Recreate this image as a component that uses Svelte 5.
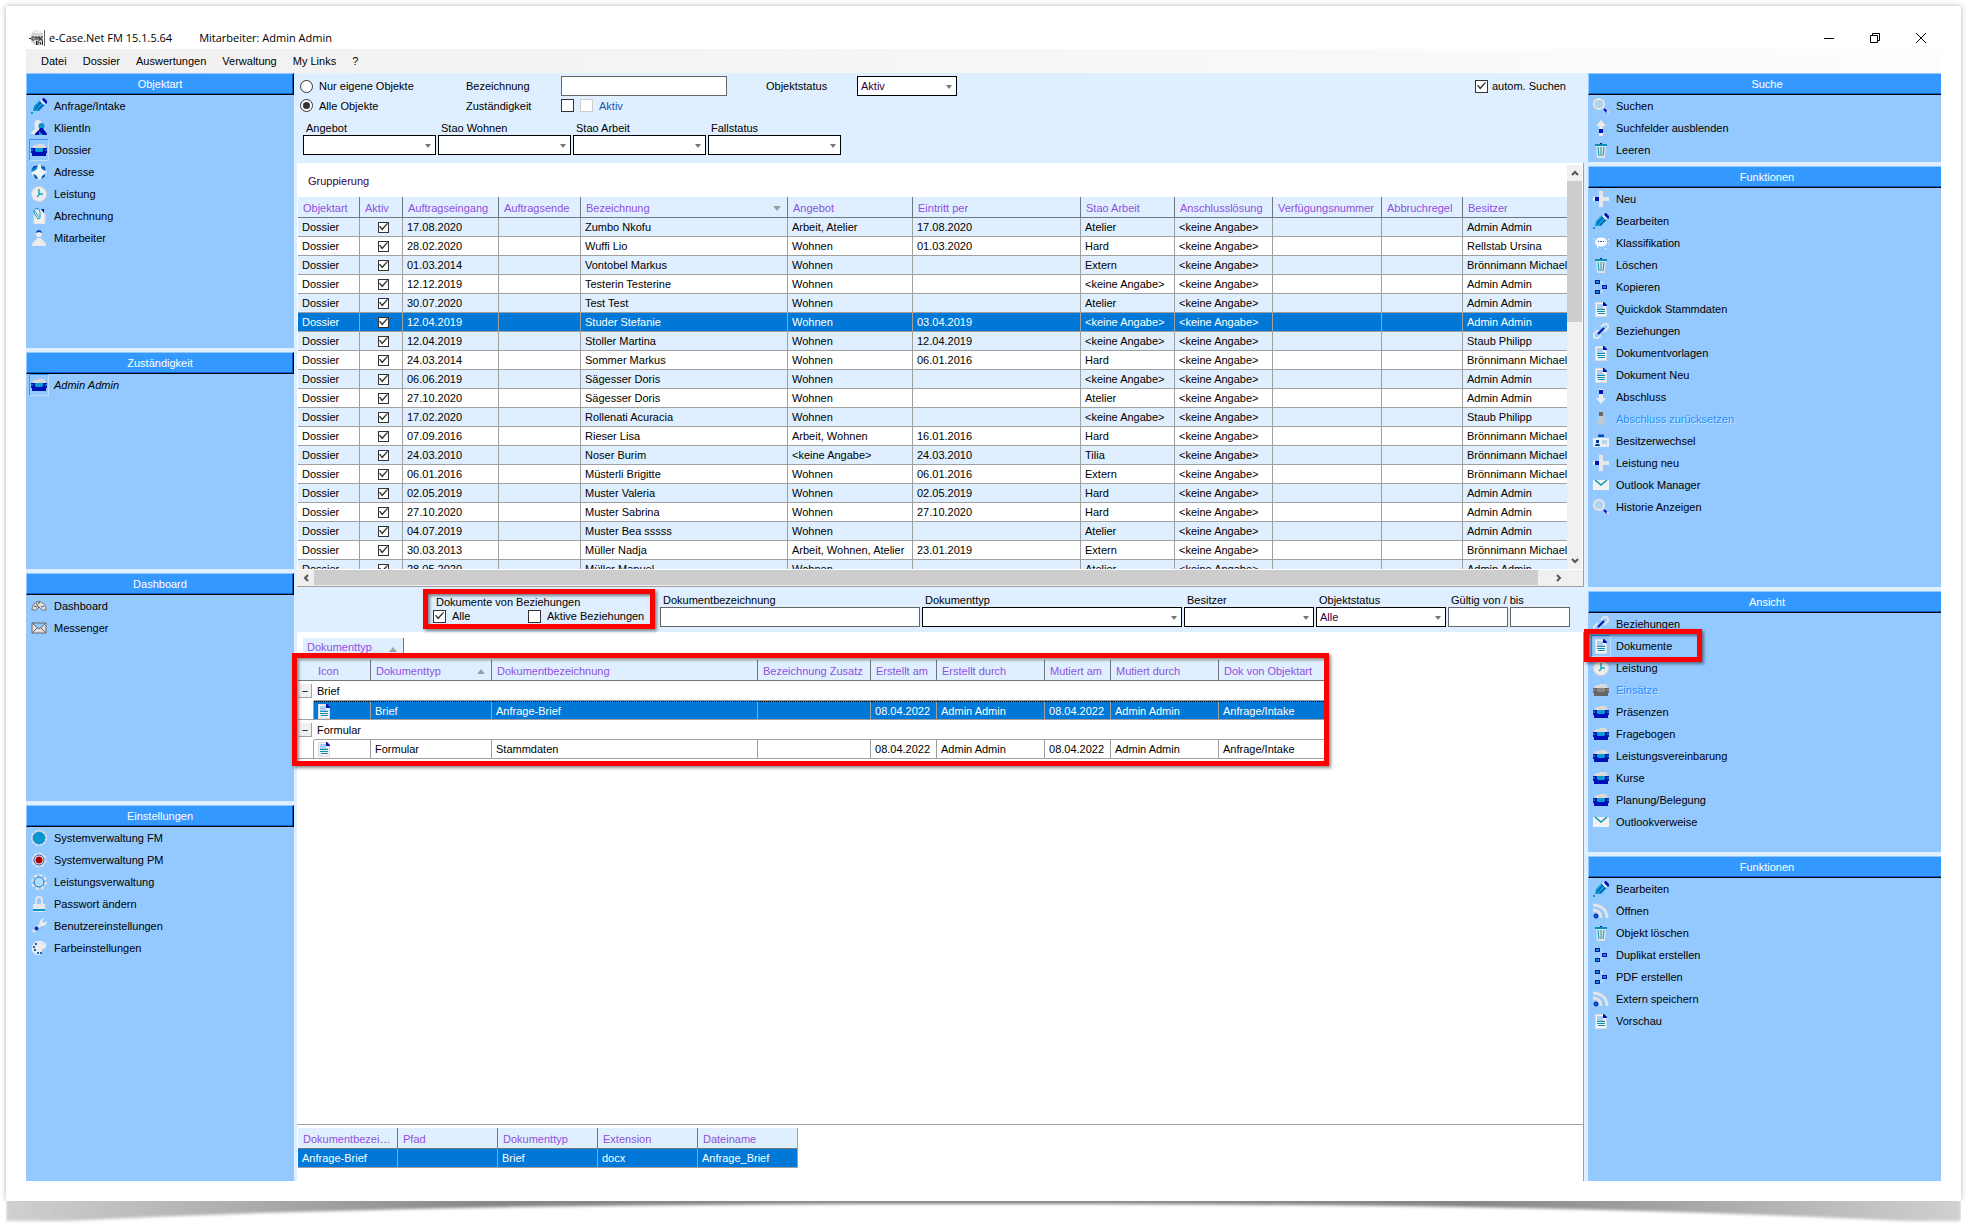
<script lang="ts">
  type Item = { label: string; icon: string; active?: boolean; disabled?: boolean; italic?: boolean; marked?: boolean };
  type Panel = { title: string; items: Item[] };

  const menu = ['Datei', 'Dossier', 'Auswertungen', 'Verwaltung', 'My Links', '?'];

  const leftPanels: Panel[] = [
    {
      title: 'Objektart',
      items: [
        { label: 'Anfrage/Intake', icon: 'pencil' },
        { label: 'KlientIn', icon: 'people' },
        { label: 'Dossier', icon: 'folder', active: true },
        { label: 'Adresse', icon: 'globe' },
        { label: 'Leistung', icon: 'clock' },
        { label: 'Abrechnung', icon: 'clip' },
        { label: 'Mitarbeiter', icon: 'person' }
      ]
    },
    {
      title: 'Zuständigkeit',
      items: [{ label: 'Admin Admin', icon: 'folder', active: true, italic: true }]
    },
    {
      title: 'Dashboard',
      items: [
        { label: 'Dashboard', icon: 'gauge' },
        { label: 'Messenger', icon: 'envelope' }
      ]
    },
    {
      title: 'Einstellungen',
      items: [
        { label: 'Systemverwaltung FM', icon: 'gearFull' },
        { label: 'Systemverwaltung PM', icon: 'gearRed' },
        { label: 'Leistungsverwaltung', icon: 'gear' },
        { label: 'Passwort ändern', icon: 'lock' },
        { label: 'Benutzereinstellungen', icon: 'wrench' },
        { label: 'Farbeinstellungen', icon: 'palette' }
      ]
    }
  ];

  const rightPanels: Panel[] = [
    {
      title: 'Suche',
      items: [
        { label: 'Suchen', icon: 'search' },
        { label: 'Suchfelder ausblenden', icon: 'up' },
        { label: 'Leeren', icon: 'trash' }
      ]
    },
    {
      title: 'Funktionen',
      items: [
        { label: 'Neu', icon: 'plus' },
        { label: 'Bearbeiten', icon: 'pencil' },
        { label: 'Klassifikation', icon: 'bubble' },
        { label: 'Löschen', icon: 'trash' },
        { label: 'Kopieren', icon: 'copy' },
        { label: 'Quickdok Stammdaten', icon: 'doc' },
        { label: 'Beziehungen', icon: 'link' },
        { label: 'Dokumentvorlagen', icon: 'doc' },
        { label: 'Dokument Neu', icon: 'doc' },
        { label: 'Abschluss', icon: 'down' },
        { label: 'Abschluss zurücksetzen', icon: 'down', disabled: true },
        { label: 'Besitzerwechsel', icon: 'card' },
        { label: 'Leistung neu', icon: 'plus' },
        { label: 'Outlook Manager', icon: 'mail' },
        { label: 'Historie Anzeigen', icon: 'search' }
      ]
    },
    {
      title: 'Ansicht',
      items: [
        { label: 'Beziehungen', icon: 'link' },
        { label: 'Dokumente', icon: 'doc', active: true, marked: true },
        { label: 'Leistung', icon: 'clock' },
        { label: 'Einsätze', icon: 'folder', disabled: true },
        { label: 'Präsenzen', icon: 'folder' },
        { label: 'Fragebogen', icon: 'folder' },
        { label: 'Leistungsvereinbarung', icon: 'folder' },
        { label: 'Kurse', icon: 'folder' },
        { label: 'Planung/Belegung', icon: 'folder' },
        { label: 'Outlookverweise', icon: 'mail' }
      ]
    },
    {
      title: 'Funktionen',
      items: [
        { label: 'Bearbeiten', icon: 'pencil' },
        { label: 'Öffnen', icon: 'feed' },
        { label: 'Objekt löschen', icon: 'trash' },
        { label: 'Duplikat erstellen', icon: 'copy' },
        { label: 'PDF erstellen', icon: 'copy' },
        { label: 'Extern speichern', icon: 'feed' },
        { label: 'Vorschau', icon: 'doc' }
      ]
    }
  ];

  const columns = [
    { label: 'Objektart', width: 62 },
    { label: 'Aktiv', width: 43 },
    { label: 'Auftragseingang', width: 96 },
    { label: 'Auftragsende', width: 82 },
    { label: 'Bezeichnung', width: 207, sort: true },
    { label: 'Angebot', width: 125 },
    { label: 'Eintritt per', width: 168 },
    { label: 'Stao Arbeit', width: 94 },
    { label: 'Anschlusslösung', width: 98 },
    { label: 'Verfügungsnummer', width: 109 },
    { label: 'Abbruchregel', width: 81 },
    { label: 'Besitzer', width: 104 }
  ];

  const none = '<keine Angabe>';
  const admin = 'Admin Admin';
  const michael = 'Brönnimann Michael';

  // Auftragseingang, Bezeichnung, Angebot, Eintritt per, Stao Arbeit, Besitzer
  const dossiers = [
    ['17.08.2020', 'Zumbo Nkofu', 'Arbeit, Atelier', '17.08.2020', 'Atelier', admin],
    ['28.02.2020', 'Wuffi Lio', 'Wohnen', '01.03.2020', 'Hard', 'Rellstab Ursina'],
    ['01.03.2014', 'Vontobel Markus', 'Wohnen', '', 'Extern', michael],
    ['12.12.2019', 'Testerin Testerine', 'Wohnen', '', none, admin],
    ['30.07.2020', 'Test Test', 'Wohnen', '', 'Atelier', admin],
    ['12.04.2019', 'Studer Stefanie', 'Wohnen', '03.04.2019', none, admin],
    ['12.04.2019', 'Stoller Martina', 'Wohnen', '12.04.2019', none, 'Staub Philipp'],
    ['24.03.2014', 'Sommer Markus', 'Wohnen', '06.01.2016', 'Hard', michael],
    ['06.06.2019', 'Sägesser Doris', 'Wohnen', '', none, admin],
    ['27.10.2020', 'Sägesser Doris', 'Wohnen', '', 'Atelier', admin],
    ['17.02.2020', 'Rollenati Acuracia', 'Wohnen', '', none, 'Staub Philipp'],
    ['07.09.2016', 'Rieser Lisa', 'Arbeit, Wohnen', '16.01.2016', 'Hard', michael],
    ['24.03.2010', 'Noser Burim', none, '24.03.2010', 'Tilia', michael],
    ['06.01.2016', 'Müsterli Brigitte', 'Wohnen', '06.01.2016', 'Extern', michael],
    ['02.05.2019', 'Muster Valeria', 'Wohnen', '02.05.2019', 'Hard', admin],
    ['27.10.2020', 'Muster Sabrina', 'Wohnen', '27.10.2020', 'Hard', admin],
    ['04.07.2019', 'Muster Bea sssss', 'Wohnen', '', 'Atelier', admin],
    ['30.03.2013', 'Müller Nadja', 'Arbeit, Wohnen, Atelier', '23.01.2019', 'Extern', michael],
    ['28.05.2020', 'Müller Manuel', 'Wohnen', '', 'Atelier', admin]
  ];
  let selected = 5;

  const docColumns = [
    { label: 'Dokumenttyp', width: 121, sort: true },
    { label: 'Dokumentbezeichnung', width: 266 },
    { label: 'Bezeichnung Zusatz', width: 113 },
    { label: 'Erstellt am', width: 66 },
    { label: 'Erstellt durch', width: 108 },
    { label: 'Mutiert am', width: 66 },
    { label: 'Mutiert durch', width: 108 },
    { label: 'Dok von Objektart', width: 105 }
  ];

  const docGroups = [
    { name: 'Brief', title: 'Anfrage-Brief', selected: true },
    { name: 'Formular', title: 'Stammdaten', selected: false }
  ];
</script>

{#snippet icon(name: string)}
  <svg class="icon" viewBox="0 0 16 16" width="16" height="16" aria-hidden="true">
    {#if name === 'pencil'}
      <path d="M2 13 3 8 9 2l5 5-6 6z" fill="#0a9bd0" />
      <path d="m4 11 6-7M7 12l6-6" stroke="#0030b8" stroke-width="1" />
      <path d="m9 3 3-3 4 4-3 3z" fill="#f1f1f1" />
      <path d="M12 0h1l3 3v2l-1 1-4-4z" fill="#0010c0" />
      <path d="M0 14h2v2H0z" fill="#0a9bd0" />
    {:else if name === 'people'}
      <path d="M7 0c3 0 4 3 3 5L8 8v6H0c0-4 4-3 4-6-1-3-1-8 3-8z" fill="#e9e9e9" />
      <circle cx="10.500" cy="6" r="3" fill="#0a8fd0" />
      <path d="M4 15c0-3 4-4 5-7h3c1 3 4 4 4 7z" fill="#0010b0" />
      <path d="m8 11 4 4H8z" fill="#0a9bd0" />
    {:else if name === 'folder'}
      <path d="M1 6 3 3h3l1-1h6l2 4z" fill="#d9d9d9" />
      <path class="f-dark" d="M0 6h16v5h-1v3H1v-3H0z" fill="#0010b8" />
      <path class="f-mid" d="M4 6h8v3l-1 1H5L4 9z" fill="#0a9bd0" />
      <path class="f-mid" d="M0 7h2v2H0zM14 7h2v2h-2z" fill="#0a6ad0" />
    {:else if name === 'globe'}
      <circle cx="8" cy="8" r="7.500" fill="#eef3f6" />
      <path d="M3 2 7 1 6 5 3 7 0 8l1-4zM10 1l4 2 1 4-3-1-2-2zM2 10l3 1 2 3-1 1-3-2zM15 9l-2 4-3 2 1-3z" fill="#0a7fc6" />
      <path d="m3 2 2 0-3 3zM12 2l2 2-1 1zM13 11l1 1-3 3zM3 12l3 2-1 1z" fill="#0010b0" />
    {:else if name === 'clock'}
      <circle cx="8" cy="8" r="7.500" fill="#ededed" stroke="#d6d6d6" />
      <path d="M8 3v6M8 8h4M8 9l-2 2" fill="none" stroke="#12a5c8" stroke-width="1.500" />
    {:else if name === 'clip'}
      <path d="M3 2h7l4 4v10H3z" fill="#f0f0f0" stroke="#dcdcdc" />
      <path d="M10 1h3v4z" fill="#0010b0" />
      <path d="M4 1c3-2 5 1 5 4v5l-2 1-4-6V2l5 7" fill="none" stroke="#0a9bc0" />
    {:else if name === 'person'}
      <circle cx="8" cy="4" r="3" fill="#eee" />
      <path d="M5 3c0-4 6-4 6 0L8 2z" fill="#0050b0" />
      <path d="M1 16c0-5 4-5 5-8h4c1 3 5 3 5 8z" fill="#ebebeb" />
    {:else if name === 'gauge'}
      <path d="M1 12C1 1 15 1 15 12h-4L8 9l-3 3z" fill="#dedede" stroke="#777" />
      <path d="M8 10 5 5M8 3v3M3 8l3 1M13 8l-3 1" stroke="#555" fill="none" />
    {:else if name === 'envelope'}
      <path d="M1 3h14v10H1zM1 3l7 6 7-6M1 13l5-5M15 13l-5-5" fill="#dedede" stroke="#666" />
    {:else if name === 'gearFull'}
      <circle cx="8" cy="8" r="7" fill="none" stroke="#dfe3e6" stroke-width="2" stroke-dasharray="3 1" />
      <circle cx="8" cy="8" r="6" fill="#0a96d0" stroke="#0878b8" stroke-dasharray="1 1" />
    {:else if name === 'gearRed'}
      <circle cx="8" cy="8" r="6.500" fill="#e4e4e4" stroke="#e4e4e4" stroke-width="2" stroke-dasharray="3 2" />
      <circle cx="8" cy="8" r="5" fill="#fff" stroke="#1a4ab0" />
      <circle cx="8" cy="8" r="3.500" fill="#a80000" />
    {:else if name === 'gear'}
      <circle cx="8" cy="8" r="6.500" fill="none" stroke="#e4e4e4" stroke-width="3" stroke-dasharray="3 2" />
      <circle cx="8" cy="8" r="5" fill="#b5dcff" stroke="#0a7fc6" />
    {:else if name === 'lock'}
      <path d="M5 8V4c0-4 6-4 6 0v4" fill="none" stroke="#e4e4e4" stroke-width="2" />
      <path d="M2 8h12v8H2z" fill="#e8e8e8" />
      <path d="M2 13h12v2H2z" fill="#0a96c8" />
    {:else if name === 'wrench'}
      <path d="m2 14 8-8" stroke="#e0e0e0" stroke-width="3" />
      <path d="M9 3c1-2 3-3 4-2l-2 2 2 2 3-2c0 3-2 5-5 5L8 7z" fill="#ececec" />
      <circle cx="5.500" cy="10.500" r="2" fill="#0030c0" />
    {:else if name === 'palette'}
      <path d="M8 1c5-1 8 3 7 6-1 2-3 1-4 3s1 4-2 5C3 16 0 11 1 7c1-4 4-6 7-6z" fill="#ececec" />
      <path d="M2 6h2v2H2zM3 9h2v2H3zM6 12h2v2H6zM4 3h2v2H4zM9 12h2v2H9z" fill="#0a6ab8" />
      <path d="m11 1 2 4" stroke="#b5d8f5" />
    {:else if name === 'search'}
      <circle cx="6" cy="6" r="5" fill="#a9d5fb" stroke="#e6e6e6" stroke-width="2" />
      <circle cx="6" cy="6" r="3.500" fill="none" stroke="#c4ccd0" />
      <path d="m11 11 3 3" stroke="#0010b8" stroke-width="2" />
      <path d="m14 13 2 2" stroke="#e0e0e0" stroke-width="2" />
    {:else if name === 'up'}
      <path d="M8 0 13 6h-3v10H6V6H3z" fill="#ebebeb" />
      <path class="f-dark" d="M6 9h4v4H6z" fill="#0010b8" />
    {:else if name === 'down'}
      <path class="f-light" d="M6 0h4v9h3l-5 6-5-6h3z" fill="#ebebeb" />
      <path class="f-dark" d="M6 1h4v4H6z" fill="#0010b8" />
    {:else if name === 'trash'}
      <path d="M3 4h10l-1 12H4z" fill="#dfe3e6" />
      <path d="M2 2h12v2H2z" fill="#0a8fb8" />
      <path d="M7 1h2v1H7z" fill="#0010a0" />
      <path d="M5 5l1 9M8 5v9M11 5l-1 9" stroke="#0a9ab8" />
    {:else if name === 'plus'}
      <path d="M6 0h4v6h6v4h-6v6H6v-6H0V6h6z" fill="#e6e8ea" />
      <path d="M2 6h4v4H2z" fill="#0010b8" />
    {:else if name === 'bubble'}
      <ellipse cx="8" cy="7" rx="6" ry="4.500" fill="#fff" />
      <path d="M4 10h3l-3 3zM0 3h1v1H0zM15 4h1v1h-1zM12 13h1v1h-1zM15 9h1v1h-1z" fill="#fff" />
      <path d="M5 6h1v1H5zM7 6h2v1H7zM10 6h1v1h-1z" fill="#0a50b0" />
    {:else if name === 'copy'}
      <path d="M5 3h4v10H5M9 8h3" fill="none" stroke="#cfe0ee" />
      <path d="M2 1h5v4H2zM2 11h5v4H2zM9 6h5v4H9z" fill="#0010b0" />
      <path d="M3 2h3v2H3zM3 12h3v2H3zM10 7h3v2h-3z" fill="#0a8fc8" />
    {:else if name === 'doc'}
      <path d="M2 1h8l4 4v11H2z" fill="#dcdcdc" />
      <path d="M3 2h7v3h3v10H3z" fill="#f2f2f2" />
      <path d="M4 3h6v4h2v1H4z" fill="#a9cdf2" />
      <path d="M10 1h1l3 3v1h-4z" fill="#0010a8" />
      <path d="M4 8h8v1H4zM4 10h8v1H4zM5 12h7v1H5z" fill="#0a8fb8" />
    {:else if name === 'link'}
      <path d="m8 4 3-3c2-1 5 1 4 4l-4 4M8 12l-3 3c-2 1-5-1-4-4l4-4" fill="none" stroke="#e2e6ea" stroke-width="2" />
      <path d="m5 11 6-6" stroke="#0018b8" stroke-width="2" />
    {:else if name === 'card'}
      <path d="M0 5h16v9H0z" fill="#e9eef2" />
      <path d="M5 4V2l2-1 1 1 1-1 2 1v2z" fill="#0a4ab0" />
      <path d="M2 13c0-3 5-3 5 0zM3 7h3v3H3z" fill="#003a9a" />
      <path d="M9 8h5M9 10h5" stroke="#7fc0e0" />
    {:else if name === 'mail'}
      <path d="M0 3h16v10H0z" fill="#f2f2f2" />
      <path d="m2 3 6 5 6-5" fill="none" stroke="#0a96b0" stroke-width="1.500" />
    {:else if name === 'feed'}
      <path d="M0 7c5 0 8 3 8 8M0 2c8 0 14 5 14 13" fill="none" stroke="#e4e4e4" stroke-width="3" />
      <circle cx="3" cy="13" r="2" fill="#0a6ad0" stroke="#0010b0" />
    {/if}
  </svg>
{/snippet}

{#snippet panel(p: Panel)}
  <section class="panel">
    <h2>{p.title}</h2>
    <ul>
      {#each p.items as item}
        <li class:marked={item.marked}>
          <button class="item" class:italic={item.italic} disabled={item.disabled}>
            <span class="icon-box" class:active={item.active}>{@render icon(item.icon)}</span>
            {item.label}
          </button>
        </li>
      {/each}
    </ul>
  </section>
{/snippet}

<div class="frame">
  <header class="titlebar">
    <svg class="logo" viewBox="0 0 16 16" width="16" height="16" aria-hidden="true">
      <path d="M2 6C3-1 12-1 14 4v11H6L2 12z" fill="#d4d4d4" />
      <path d="M5 3c2-3 6-3 7 0z" fill="#f4f4f4" />
      <path d="M0 8.500h2M5 7H3v3h2M6 10V7h2v3M11 7H9v1h2v2H9M14 7h-2v3h2" fill="none" stroke="#222" />
      <path d="M7.500 11v4M9 11v4M10.500 12.500h1v2M13.500 11v4" fill="none" stroke="#222" />
      <path d="M15.500 0v16" fill="none" stroke="#666" />
    </svg>
    <span class="title">e-Case.Net FM 15.1.5.64</span>
    <span class="user">Mitarbeiter: Admin Admin</span>
    <div class="controls">
      <button aria-label="Minimieren"><svg width="12" height="12" viewBox="0 0 12 12"><path d="M1 6.500h10" stroke="#000" /></svg></button>
      <button aria-label="Wiederherstellen"><svg width="12" height="12" viewBox="0 0 12 12"><path d="M1.500 3.500h7v7h-7zM3.500 3V1.500h7v7H9" fill="none" stroke="#000" /></svg></button>
      <button aria-label="Schliessen"><svg width="12" height="12" viewBox="0 0 12 12"><path d="m1 1 10 10M11 1 1 11" stroke="#000" /></svg></button>
    </div>
  </header>

  <nav class="menubar">
    {#each menu as entry}
      <button>{entry}</button>
    {/each}
  </nav>

  <div class="workspace">
    <aside class="side left">
      {#each leftPanels as p}
        {@render panel(p)}
      {/each}
    </aside>

    <main>
      <form class="search">
        <div class="search-top">
          <label class="choice scope"><input type="radio" name="scope" /> Nur eigene Objekte</label>
          <label for="bez">Bezeichnung</label>
          <input id="bez" class="text" type="text" />
          <label for="status">Objektstatus</label>
          <span class="combo"><select id="status"><option>Aktiv</option></select></span>
          <label class="choice auto"><input type="checkbox" checked /> autom. Suchen</label>

          <label class="choice scope"><input type="radio" name="scope" checked /> Alle Objekte</label>
          <span>Zuständigkeit</span>
          <span class="boxes">
            <input type="checkbox" aria-label="Zuständigkeit" />
            <label class="choice blue"><input type="checkbox" disabled /> Aktiv</label>
          </span>
        </div>
        <div class="search-bottom">
          {#each ['Angebot', 'Stao Wohnen', 'Stao Arbeit', 'Fallstatus'] as name, i}
            <div class="field">
              <label for="filter-{i}">{name}</label>
              <span class="combo"><select id="filter-{i}"><option></option></select></span>
            </div>
          {/each}
        </div>
      </form>

      <section class="grid-area">
        <div class="grid-body">
          <div class="grid-content">
            <p class="grouping">Gruppierung</p>
            <table>
              <colgroup>
                {#each columns as col}<col style="width: {col.width}px" />{/each}
              </colgroup>
              <thead>
                <tr>
                  {#each columns as col}
                    <th class:sort-down={col.sort}>{col.label}</th>
                  {/each}
                </tr>
              </thead>
              <tbody>
                {#each dossiers as d, i}
                  <tr class:selected={i === selected} on:click={() => (selected = i)}>
                    <td>Dossier</td>
                    <td><input type="checkbox" class="small" checked aria-label="Aktiv" /></td>
                    <td>{d[0]}</td>
                    <td></td>
                    <td>{d[1]}</td>
                    <td>{d[2]}</td>
                    <td>{d[3]}</td>
                    <td>{d[4]}</td>
                    <td>{none}</td>
                    <td></td>
                    <td></td>
                    <td>{d[5]}</td>
                  </tr>
                {/each}
              </tbody>
            </table>
          </div>
          <div class="vscroll">
            <button aria-label="Nach oben"><svg width="8" height="6" viewBox="0 0 8 6"><path d="m1 5 3-3 3 3" /></svg></button>
            <div class="thumb"></div>
            <button class="end" aria-label="Nach unten"><svg width="8" height="6" viewBox="0 0 8 6"><path d="m1 1 3 3 3-3" /></svg></button>
          </div>
        </div>
        <div class="hscroll">
          <button aria-label="Nach links"><svg width="6" height="8" viewBox="0 0 6 8"><path d="M5 1 2 4l3 3" /></svg></button>
          <div class="thumb"></div>
          <button aria-label="Nach rechts"><svg width="6" height="8" viewBox="0 0 6 8"><path d="m1 1 3 3-3 3" /></svg></button>
        </div>
      </section>

      <form class="doc-filter">
        <div class="relations">
          <fieldset>
            <legend>Dokumente von Beziehungen</legend>
            <label class="choice"><input type="checkbox" checked /> Alle</label>
            <label class="choice"><input type="checkbox" /> Aktive Beziehungen</label>
          </fieldset>
        </div>
        <div class="field w260">
          <label for="docname">Dokumentbezeichnung</label>
          <input id="docname" class="text" type="text" />
        </div>
        <div class="field w260">
          <label for="doctype">Dokumenttyp</label>
          <span class="combo"><select id="doctype"><option></option></select></span>
        </div>
        <div class="field w130">
          <label for="owner">Besitzer</label>
          <span class="combo"><select id="owner"><option></option></select></span>
        </div>
        <div class="field w130">
          <label for="docstatus">Objektstatus</label>
          <span class="combo"><select id="docstatus"><option>Alle</option></select></span>
        </div>
        <div class="field">
          <label for="from">Gültig von / bis</label>
          <span class="range">
            <input id="from" class="text" type="text" />
            <input class="text" type="text" aria-label="Gültig bis" />
          </span>
        </div>
      </form>

      <section class="docs">
        <div class="chip">Dokumenttyp</div>
        <div class="doc-table">
          <table>
            <colgroup>
              <col class="indent" />
              <col class="icon-col" />
              {#each docColumns as col}<col style="width: {col.width}px" />{/each}
            </colgroup>
            <thead>
              <tr>
                <th colspan="2" class="icon-head">Icon</th>
                {#each docColumns as col}
                  <th class:sort-up={col.sort}>{col.label}</th>
                {/each}
              </tr>
            </thead>
            <tbody>
              {#each docGroups as g}
                <tr class="group">
                  <td class="toggle"><button aria-label="Gruppe {g.name} zuklappen">−</button></td>
                  <td colspan="9">{g.name}</td>
                </tr>
                <tr class:focused={g.selected}>
                  <td class="blank"></td>
                  <td class="doc-icon">{@render icon('doc')}</td>
                  <td>{g.name}</td>
                  <td>{g.title}</td>
                  <td></td>
                  <td>08.04.2022</td>
                  <td>Admin Admin</td>
                  <td>08.04.2022</td>
                  <td>Admin Admin</td>
                  <td>Anfrage/Intake</td>
                </tr>
              {/each}
            </tbody>
          </table>
        </div>
      </section>

      <section class="files">
        <table>
          <thead>
            <tr>
              <th>Dokumentbezeichnung</th>
              <th>Pfad</th>
              <th>Dokumenttyp</th>
              <th>Extension</th>
              <th>Dateiname</th>
            </tr>
          </thead>
          <tbody>
            <tr class="selected">
              <td>Anfrage-Brief</td>
              <td></td>
              <td>Brief</td>
              <td>docx</td>
              <td>Anfrage_Brief</td>
            </tr>
          </tbody>
        </table>
      </section>
    </main>

    <aside class="side right">
      {#each rightPanels as p}
        {@render panel(p)}
      {/each}
    </aside>
  </div>
</div>

<svg class="shadow" viewBox="0 0 1955 29" preserveAspectRatio="none" aria-hidden="true">
  <defs>
    <linearGradient id="fade">
      <stop offset="0" stop-color="#d0d0d0" />
      <stop offset="0.25" stop-color="#868686" />
      <stop offset="0.75" stop-color="#868686" />
      <stop offset="1" stop-color="#d0d0d0" />
    </linearGradient>
    <filter id="soft" x="-1%" y="-50%" width="102%" height="200%">
      <feGaussianBlur stdDeviation="1.5" />
    </filter>
  </defs>
  <path d="M0-10H1955V20H1900C1600 5 1300 3 978 3S360 5 60 20H0z" fill="url(#fade)" filter="url(#soft)" />
</svg>

<style>
  :global(body) {
    background: #fff;
    font-family: 'Liberation Sans', Arial, sans-serif;
    font-size: 11px;
    line-height: 14px;
    color: #000;
  }

  *,
  *::before,
  *::after {
    box-sizing: border-box;
  }

  button,
  input,
  select {
    margin: 0;
    padding: 0;
    border: 0;
    border-radius: 0;
    background: none;
    font: inherit;
    color: inherit;
  }

  .frame {
    position: relative;
    z-index: 1;
    display: flex;
    flex-direction: column;
    height: calc(100vh - 35px);
    margin: 6px 14px 0 6px;
    padding: 20px;
    background: #fff;
    box-shadow: 0 0 5px rgba(0, 0, 0, 0.3);
    clip-path: inset(-6px -6px 0 -6px);
  }

  .shadow {
    display: block;
    width: calc(100% - 20px);
    height: 29px;
    margin: 0 14px 0 6px;
  }

  /* window chrome */
  .titlebar {
    display: flex;
    align-items: center;
    height: 23px;
    padding-left: 3px;
    font-family: 'Open Sans', 'Noto Sans', sans-serif;
  }

  .title {
    margin: 0 27px 0 4px;
  }

  .controls {
    display: flex;
    gap: 34px;
    margin-left: auto;
    padding-right: 14px;
  }

  .controls button {
    display: flex;
  }

  .menubar {
    display: flex;
    height: 24px;
    padding-left: 7px;
    background: linear-gradient(90deg, #f0f0f0, #fdfdfd);
  }

  .menubar button {
    padding: 0 8px;
  }

  .workspace {
    flex: 1;
    display: grid;
    grid-template-columns: 268px minmax(0, 1fr) 353px;
    min-height: 0;
    background: #dfefff;
  }

  /* side panels */
  .side {
    display: grid;
    gap: 4px;
    min-height: 0;
  }

  .left {
    grid-template-rows: 275fr 217fr 228fr 376fr;
  }

  .right {
    grid-template-rows: 89fr 421fr 261fr 325fr;
  }

  .panel {
    background: #94c9ff;
  }

  h2 {
    height: 22px;
    margin: 0;
    padding-left: 4px;
    border-top: 1px solid #94c9ff;
    border-left: 1px solid #94c9ff;
    border-bottom: 1px solid #000;
    background: #3399ff;
    box-shadow: inset 0 -1px #0a60c0;
    color: #fff;
    font-size: inherit;
    font-weight: normal;
    line-height: 20px;
    text-align: center;
  }

  .left h2 {
    padding-left: 0;
    border-right: 1px solid #000;
    box-shadow: inset -1px -1px #0a60c0;
  }

  ul {
    margin: 0;
    padding: 0;
    list-style: none;
  }

  .item {
    display: flex;
    align-items: center;
    gap: 5px;
    width: 100%;
    height: 22px;
    padding-left: 3px;
    text-align: left;
  }

  .item:disabled {
    color: #1e90ff;
    text-shadow: 1px 1px #c8e4ff;
  }

  .item:disabled .f-dark {
    fill: #666;
  }

  .item:disabled .f-mid {
    fill: #888;
  }

  .item:disabled .f-light {
    fill: #c8c8c8;
  }

  .italic {
    font-style: italic;
  }

  .icon {
    display: block;
    flex: none;
  }

  .icon-box {
    display: flex;
    align-items: center;
    justify-content: center;
    width: 20px;
    height: 22px;
  }

  .icon-box.active {
    border: 1px solid;
    border-color: #3399ff #c0e0ff #c0e0ff #3399ff;
  }

  .marked {
    position: relative;
  }

  .marked::after,
  .relations::after,
  .doc-table::after {
    content: '';
    position: absolute;
    z-index: 2;
    border: 5px solid #f00;
    box-shadow: 2px 2px 3px rgba(0, 0, 0, 0.45), inset 2px 2px 3px rgba(0, 0, 0, 0.45);
    pointer-events: none;
  }

  .marked::after {
    top: -6px;
    bottom: -5px;
    left: -4px;
    width: 118px;
  }

  /* centre column */
  main {
    display: grid;
    grid-template-rows: 90px minmax(0, 424fr) 45px minmax(0, 493fr) 56px;
    margin: 0 4px 0 3px;
    min-height: 0;
  }

  .search {
    padding: 3px 18px 0 6px;
  }

  .search-top {
    display: grid;
    grid-template-columns: 163px 95px 205px 91px 100px 1fr;
    grid-template-rows: 20px 19px;
    align-items: center;
  }

  .search-top .text {
    width: 166px;
  }

  .auto {
    justify-self: end;
  }

  .search-top > label:nth-child(7) {
    grid-column: 1;
  }

  .choice {
    display: flex;
    align-items: center;
    gap: 6px;
    white-space: nowrap;
  }

  .scope {
    margin-left: -3px;
  }

  .auto {
    gap: 4px;
  }

  .boxes {
    display: flex;
    gap: 6px;
  }

  .blue {
    color: #1458b0;
  }

  .search-bottom {
    display: flex;
    gap: 2px;
    padding-top: 6px;
  }

  .search-bottom .field {
    width: 133px;
  }

  .field > label {
    display: block;
    padding-left: 3px;
  }

  .text {
    display: block;
    width: 100%;
    height: 20px;
    padding: 0 3px;
    border: 1px solid #666;
    background: #fff;
  }

  .combo {
    position: relative;
    display: block;
  }

  .combo::after {
    content: '';
    position: absolute;
    top: 9px;
    right: 5px;
    border: 3px solid transparent;
    border-top: 4px solid #777;
    border-bottom: 0;
    pointer-events: none;
  }

  select {
    display: block;
    width: 100%;
    height: 20px;
    padding-left: 3px;
    border: 1px solid #000;
    background: #fff;
    color: #30003a;
    appearance: none;
  }

  input[type='checkbox'],
  input[type='radio'] {
    display: grid;
    flex: none;
    place-content: center;
    width: 13px;
    height: 13px;
    border: 1px solid #333;
    background: #fff;
    appearance: none;
  }

  input[type='radio'] {
    border-radius: 50%;
  }

  input[type='radio']:checked::before {
    content: '';
    width: 7px;
    height: 7px;
    border-radius: 50%;
    background: #333;
  }

  input[type='checkbox']:checked::before {
    content: '';
    width: 9px;
    height: 8px;
    background: #333;
    clip-path: polygon(0 45%, 12% 35%, 35% 65%, 90% 0, 100% 10%, 35% 95%);
  }

  input[type='checkbox']:disabled {
    border-color: #ccc;
  }

  input.small {
    width: 11px;
    height: 11px;
    margin: 0 14px;
  }

  /* tables */
  table {
    border-collapse: separate;
    border-spacing: 0;
    table-layout: fixed;
    width: 0;
  }

  th,
  td {
    overflow: hidden;
    height: 19px;
    padding: 0 3px 0 4px;
    border-right: 1px solid #a0a0a0;
    border-bottom: 1px solid #a0a0a0;
    text-align: left;
    white-space: nowrap;
  }

  th {
    position: relative;
    height: 21px;
    padding: 1px 2px 0 5px;
    border-color: #70787f;
    background: #dfefff;
    color: #9050e0;
    font-weight: normal;
    text-overflow: ellipsis;
  }

  th:last-child,
  td:last-child {
    padding-right: 0;
    border-right: 0;
  }

  .sort-down::after,
  .sort-up::after,
  .chip::after {
    content: '';
    position: absolute;
    top: 9px;
    right: 6px;
    border: 4px solid transparent;
  }

  .sort-down::after {
    border-top: 5px solid #a0a0a0;
    border-bottom: 0;
  }

  .sort-up::after,
  .chip::after {
    border-bottom: 5px solid #a0a0a0;
    border-top: 0;
  }

  .grid-area {
    display: flex;
    flex-direction: column;
    overflow: hidden;
    border-right: 1px solid #a0a0a0;
    border-bottom: 1px solid #a0a0a0;
    background: #fff;
  }

  .grid-body {
    flex: 1;
    display: flex;
    min-height: 0;
  }

  .grid-content {
    flex: 1;
    min-width: 0;
    padding-left: 1px;
    overflow: hidden;
  }

  .grouping {
    height: 34px;
    margin: 0;
    padding: 11px 0 0 10px;
    color: #40003f;
  }

  .grid-content tbody tr:nth-child(odd) {
    background: #dfefff;
  }

  .grid-content tbody tr.selected,
  .selected {
    background: #0078d7;
    color: #fff;
  }

  .vscroll {
    display: flex;
    flex-direction: column;
    width: 15px;
    margin: 2px 1px 0 0;
    background: #f0f0f0;
  }

  .vscroll button,
  .hscroll button {
    display: flex;
    flex: none;
    align-items: center;
    justify-content: center;
    width: 17px;
    height: 16px;
  }

  .vscroll button {
    width: 15px;
  }

  .vscroll svg path,
  .hscroll svg path {
    fill: none;
    stroke: #555;
    stroke-width: 2;
  }

  .vscroll .thumb {
    height: 35%;
    background: #cdcdcd;
  }

  .vscroll .end {
    margin-top: auto;
  }

  .hscroll {
    display: flex;
    height: 17px;
    padding-right: 16px;
    border-top: 1px solid #fff;
    background: #f0f0f0;
  }

  .hscroll .thumb {
    flex: 1;
    height: 15px;
    margin-right: 12px;
    background: #cdcdcd;
  }

  /* document filter */
  .doc-filter {
    display: flex;
    gap: 2px;
    padding: 6px 14px 0 0;
    justify-content: flex-end;
  }

  .relations {
    position: relative;
    width: 226px;
    height: 36px;
    margin-right: 3px;
  }

  .relations::after {
    inset: -4px 0 0 -6px;
  }

  fieldset {
    display: grid;
    grid-template-columns: 95px 1fr;
    align-content: start;
    margin: 0;
    padding: 0 0 0 4px;
    border: 0;
  }

  fieldset .choice {
    height: 14px;
  }

  legend {
    height: 16px;
    margin-left: 3px;
    padding: 2px 0 0 0;
  }

  .w260 {
    width: 260px;
  }

  .w130 {
    width: 130px;
  }

  .range {
    display: flex;
    gap: 2px;
  }

  .range .text {
    width: 60px;
  }

  .docs {
    padding: 6px 0 0 1px;
    border-right: 1px solid #a0a0a0;
    border-bottom: 1px solid #a0a0a0;
    background: #fff;
  }

  .chip {
    position: relative;
    width: 101px;
    height: 20px;
    margin: 0 0 2px 5px;
    padding-left: 4px;
    border-right: 1px solid #70787f;
    background: #dfefff;
    color: #9050e0;
    line-height: 18px;
  }

  .doc-table {
    position: relative;
    width: 1026px;
  }

  .doc-table::after {
    inset: -7px -5px -7px -6px;
  }

  .indent {
    width: 16px;
  }

  .icon-col {
    width: 57px;
  }

  .doc-table .icon-head {
    padding-left: 20px;
  }

  .doc-table .group td {
    height: 20px;
    border-right: 0;
  }

  .doc-table .toggle {
    padding: 0 1px;
    border-bottom: 0;
  }

  .toggle button {
    display: block;
    width: 13px;
    height: 14px;
    border-right: 1px solid #a0a0a0;
    border-bottom: 1px solid #a0a0a0;
    background: #f0f0f0;
    line-height: 12px;
  }

  .group td:last-child {
    padding-left: 3px;
  }

  .doc-table .doc-icon {
    padding: 0 2px;
  }

  .focused td:not(.blank) {
    border-top: 1px dotted #000;
    background: #0078d7;
    color: #fff;
  }

  .files {
    padding: 3px 0 0 1px;
    border-right: 1px solid #a0a0a0;
    background: #fff;
  }

  .files table {
    width: 500px;
  }

  .files th:last-child,
  .files td:last-child {
    border-right: 1px solid #a0a0a0;
  }
</style>
